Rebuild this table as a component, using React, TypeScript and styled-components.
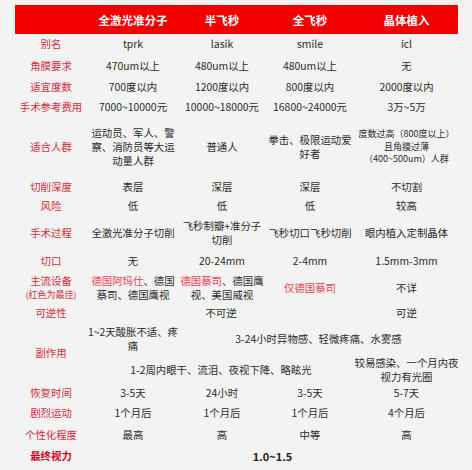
import React from "react";
import styled, { createGlobalStyle } from "styled-components";

const Global = createGlobalStyle`
  html, body { margin: 0; padding: 0; background: #f3f3f3; }
  body { font-family: "Noto Sans CJK SC", "Noto Sans", sans-serif; color: #2b2b2b; }
`;

const COLS = "72px 92px 86px 90px 103px";

const Page = styled.div`
  padding: 5px 0 0 15px;
  width: 443px;
`;

const Table = styled.div`
  display: flex;
  flex-direction: column;
`;

const Row = styled.div<{ $h: number }>`
  display: grid;
  grid-template-columns: ${COLS};
  height: ${(p) => p.$h}px;
`;

const HeaderRow = styled(Row)`
  background: #f20000;
`;

const SplitRow = styled.div<{ $rows: string }>`
  display: grid;
  grid-template-columns: ${COLS};
  grid-template-rows: ${(p) => p.$rows};
`;

const Cell = styled.div<{ $col?: string; $row?: string; $small?: boolean }>`
  display: flex;
  align-items: center;
  justify-content: center;
  text-align: center;
  font-size: ${(p) => (p.$small ? "9px" : "10.4px")};
  line-height: ${(p) => (p.$small ? "12.5px" : "14px")};
  color: #2b2b2b;
  white-space: nowrap;
  ${(p) => (p.$col ? `grid-column: ${p.$col};` : "")}
  ${(p) => (p.$row ? `grid-row: ${p.$row};` : "")}
`;

const HeadCell = styled(Cell)`
  color: #ffffff;
  font-weight: 700;
  font-size: 11.5px;
`;

const Label = styled(Cell)<{ $strong?: boolean }>`
  flex-direction: column;
  color: ${(p) => (p.$strong ? "#d4001c" : "#d52b3c")};
  font-weight: ${(p) => (p.$strong ? 700 : 400)};
`;

const Note = styled.span`
  font-size: 9px;
  line-height: 13px;
  color: #d52b3c;
`;

const Hot = styled.span`
  color: #f0414e;
`;

const Bold = styled(Cell)`
  font-weight: 700;
  font-size: 11px;
  color: #1e1e1e;
`;

type Simple = { h: number; label: string; vals: string[] };

const top: Simple[] = [
  { h: 20.5, label: "别名", vals: ["tprk", "lasik", "smile", "icl"] },
  { h: 22.5, label: "角膜要求", vals: ["470um以上", "480um以上", "480um以上", "无"] },
  { h: 20.5, label: "适宜度数", vals: ["700度以内", "1200度以内", "800度以内", "2000度以内"] },
  { h: 19, label: "手术参考费用", vals: ["7000~10000元", "10000~18000元", "16800~24000元", "3万~5万"] },
];

const bottom: Simple[] = [
  { h: 20, label: "恢复时间", vals: ["3-5天", "24小时", "3-5天", "5-7天"] },
  { h: 20, label: "剧烈运动", vals: ["1个月后", "1个月后", "1个月后", "4个月后"] },
  { h: 24, label: "个性化程度", vals: ["最高", "高", "中等", "高"] },
];

const SimpleRow = ({ r }: { r: Simple }) => (
  <Row $h={r.h}>
    <Label>{r.label}</Label>
    {r.vals.map((v, i) => (
      <Cell key={i}>{v}</Cell>
    ))}
  </Row>
);

export default function App() {
  return (
    <>
      <Global />
      <Page>
        <Table>
          <HeaderRow $h={29}>
            <HeadCell />
            <HeadCell>全激光准分子</HeadCell>
            <HeadCell>半飞秒</HeadCell>
            <HeadCell>全飞秒</HeadCell>
            <HeadCell>晶体植入</HeadCell>
          </HeaderRow>

          {top.map((r) => (
            <SimpleRow key={r.label} r={r} />
          ))}

          <Row $h={61}>
            <Label>适合人群</Label>
            <Cell>
              运动员、军人、警
              <br />
              察、消防员等大运
              <br />
              动量人群
            </Cell>
            <Cell>普通人</Cell>
            <Cell>
              拳击、极限运动爱
              <br />
              好者
            </Cell>
            <Cell $small>
              度数过高（800度以上）
              <br />
              且角膜过薄
              <br />
              （400~500um）人群
            </Cell>
          </Row>

          <Row $h={19.5}>
            <Label>切削深度</Label>
            <Cell>表层</Cell>
            <Cell>深层</Cell>
            <Cell>深层</Cell>
            <Cell>不切割</Cell>
          </Row>

          <Row $h={18}>
            <Label>风险</Label>
            <Cell>低</Cell>
            <Cell>低</Cell>
            <Cell>低</Cell>
            <Cell>较高</Cell>
          </Row>

          <Row $h={36}>
            <Label>手术过程</Label>
            <Cell>全激光准分子切削</Cell>
            <Cell>
              飞秒制瓣+准分子
              <br />
              切削
            </Cell>
            <Cell>飞秒切口飞秒切削</Cell>
            <Cell>眼内植入定制晶体</Cell>
          </Row>

          <Row $h={20}>
            <Label>切口</Label>
            <Cell>无</Cell>
            <Cell>20-24mm</Cell>
            <Cell>2-4mm</Cell>
            <Cell>1.5mm-3mm</Cell>
          </Row>

          <Row $h={33}>
            <Label>
              主流设备
              <Note>(红色为最佳)</Note>
            </Label>
            <Cell>
              <span>
                <Hot>德国阿玛仕</Hot>、德国
                <br />
                蔡司、德国鹰视
              </span>
            </Cell>
            <Cell>
              <span>
                <Hot>德国蔡司</Hot>、德国鹰
                <br />
                视、美国威视
              </span>
            </Cell>
            <Cell>
              <Hot>仅德国蔡司</Hot>
            </Cell>
            <Cell>不详</Cell>
          </Row>

          <Row $h={18}>
            <Label>可逆性</Label>
            <Cell $col="span 3">不可逆</Cell>
            <Cell>可逆</Cell>
          </Row>

          <SplitRow $rows="34px 27px">
            <Label $col="1" $row="1 / 3">副作用</Label>
            <Cell $col="2" $row="1">
              1~2天酸胀不适、疼
              <br />
              痛
            </Cell>
            <Cell $col="3 / 6" $row="1">
              3-24小时异物感、轻微疼痛、水雾感
            </Cell>
            <Cell $col="2 / 5" $row="2">
              1-2周内眼干、流泪、夜视下降、略眩光
            </Cell>
            <Cell $col="5" $row="2">
              较易感染、一个月内夜
              <br />
              视力有光圈
            </Cell>
          </SplitRow>

          {bottom.map((r) => (
            <SimpleRow key={r.label} r={r} />
          ))}

          <Row $h={18}>
            <Label $strong>最终视力</Label>
            <Bold $col="span 4">1.0~1.5</Bold>
          </Row>
        </Table>
      </Page>
    </>
  );
}
